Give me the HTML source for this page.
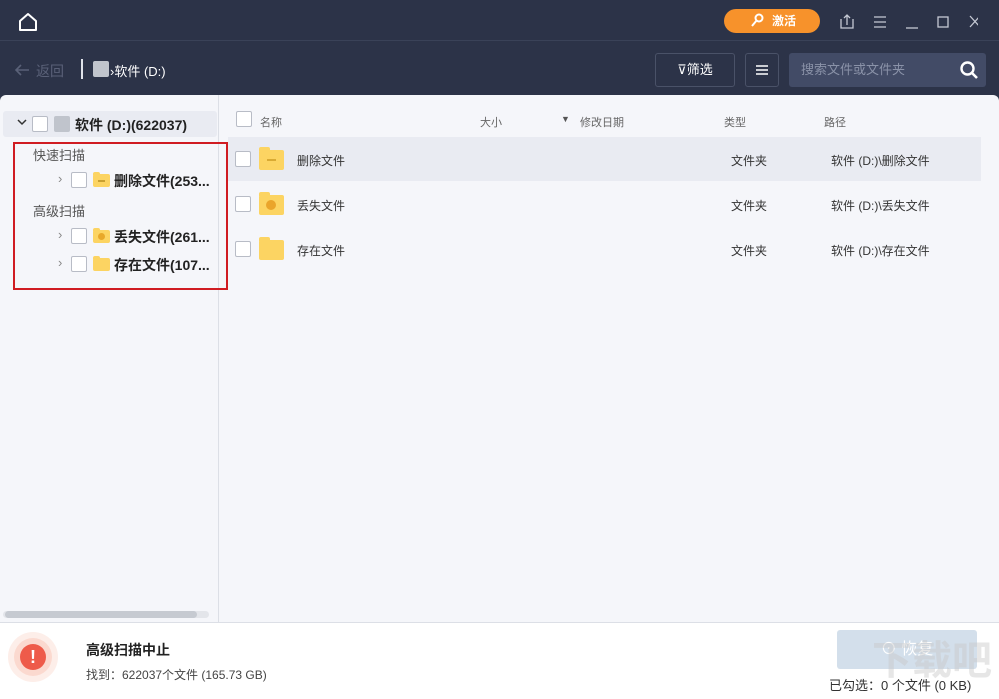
<!DOCTYPE html>
<html><head><meta charset="utf-8"><style>
*{margin:0;padding:0;box-sizing:border-box}
html,body{width:999px;height:699px;overflow:hidden}
body{background:#2c3348;font-family:"Liberation Sans","Noto Sans CJK SC",sans-serif;position:relative;font-size:12px;color:#333;white-space:nowrap}
.a{position:absolute}
.cb{position:absolute;width:16px;height:16px;border:1px solid #b8bcc6;background:#fff;border-radius:2px}
.fold{position:absolute;width:25px;height:20px;background:#fcd462;border-radius:2px}
.fold:before{content:"";position:absolute;left:0;top:-3px;width:11px;height:4px;background:#fcd462;border-radius:2px 2px 0 0}
.sf{width:17px;height:13px}
.sf:before{width:7px;height:3px;top:-2px}
</style></head><body>
<div class="a" style="left:0;top:40px;width:999px;height:1px;background:#3a4258"></div>
<svg class="a" style="left:17px;top:11px" width="22" height="22" viewBox="0 0 22 22"><path d="M3 10 L11 3 L19 10 V19 H3 Z" fill="none" stroke="#fff" stroke-width="2" stroke-linejoin="round"/></svg>
<div class="a" style="left:724px;top:9px;width:96px;height:24px;border-radius:12px;background:#f7922b;color:#fff;font-size:12px;font-weight:bold;line-height:24px;padding-left:48px">激活</div>
<svg class="a" style="left:750px;top:13px" width="14" height="16"><circle cx="9" cy="5" r="3.5" fill="none" stroke="#fff" stroke-width="2"/><path d="M7 7 L2 13" stroke="#fff" stroke-width="2"/></svg>
<svg class="a" style="left:838px;top:13px" width="140" height="18" fill="none" stroke="#c5c9d4" stroke-width="1.3"><path d="M3 6 V15 H15 V6 M9 12 V2 M6 5 L9 2 L12 5"/><path d="M36 4 H48 M36 9 H48 M36 14 H48"/><path d="M68 15 H80"/><rect x="100" y="4" width="10" height="10"/><path d="M132 3 L142 14 M142 3 L132 14"/></svg>
<svg class="a" style="left:14px;top:63px" width="16" height="14"><path d="M15 7 H2 M7 2 L2 7 L7 12" fill="none" stroke="#5a6178" stroke-width="1.6"/></svg>
<div class="a" style="left:36px;top:61px;color:#5a6178;font-size:14px">返回</div>
<div class="a" style="left:81px;top:59px;width:2px;height:20px;background:#dfe2ea"></div>
<div class="a" style="left:93px;top:61px;width:16px;height:16px;background:#c0c4cc;border-radius:2px"></div>
<div class="a" style="left:110px;top:61px;color:#fff;font-size:13px">›软件 (D:)</div>
<div class="a" style="left:655px;top:53px;width:80px;height:34px;border:1px solid #4a5268;border-radius:3px;color:#fff;font-size:13px;line-height:32px;text-align:center">⊽筛选</div>
<div class="a" style="left:745px;top:53px;width:34px;height:34px;border:1px solid #4a5268;border-radius:3px"></div>
<svg class="a" style="left:755px;top:63px" width="14" height="14"><path d="M1 3 H13 M1 7 H13 M1 11 H13" stroke="#fff" stroke-width="1.4"/></svg>
<div class="a" style="left:789px;top:53px;width:197px;height:34px;background:#424b66;border-radius:3px;color:#8a92a8;font-size:13px;line-height:34px;padding-left:12px">搜索文件或文件夹</div>
<svg class="a" style="left:959px;top:60px" width="20" height="20"><circle cx="8.5" cy="8.5" r="6" fill="none" stroke="#fff" stroke-width="2.4"/><path d="M13 13 L18 18" stroke="#fff" stroke-width="2.6"/></svg>

<div class="a" style="left:0;top:95px;width:999px;height:527px;background:#f5f6fa;border-radius:6px 6px 0 0"></div>
<div class="a" style="left:218px;top:95px;width:1px;height:527px;background:#dcdfe6"></div>
<div class="a" style="left:3px;top:111px;width:214px;height:26px;background:#e9ebf2;border-radius:3px"></div>
<svg class="a" style="left:17px;top:119px" width="10" height="8"><path d="M1 1 L5 5 L9 1" fill="none" stroke="#333" stroke-width="1.5"/></svg>
<div class="cb" style="left:32px;top:116px"></div>
<div class="a" style="left:54px;top:116px;width:16px;height:16px;background:#c0c4cc;border-radius:2px"></div>
<div class="a" style="left:75px;top:115px;font-size:14px;font-weight:bold;color:#222">软件 (D:)(622037)</div>
<div class="a" style="left:13px;top:142px;width:215px;height:148px;border:2px solid #d01c22"></div>
<div class="a" style="left:33px;top:145px;font-size:13px;color:#555">快速扫描</div>
<div class="a" style="left:33px;top:201px;font-size:13px;color:#555">高级扫描</div>
<div class="a" style="left:58px;top:171px;color:#888;font-size:13px">›</div>
<div class="a" style="left:58px;top:227px;color:#888;font-size:13px">›</div>
<div class="a" style="left:58px;top:255px;color:#888;font-size:13px">›</div>
<div class="cb" style="left:71px;top:172px"></div>
<div class="cb" style="left:71px;top:228px"></div>
<div class="cb" style="left:71px;top:256px"></div>
<div class="fold sf" style="left:93px;top:174px"><div class="a" style="left:5px;top:6px;width:7px;height:1.5px;background:#c9a030"></div></div>
<div class="fold sf" style="left:93px;top:230px"><div class="a" style="left:5px;top:3px;width:7px;height:7px;border-radius:50%;background:#e8a82a"></div></div>
<div class="fold sf" style="left:93px;top:258px"></div>
<div class="a" style="left:114px;top:171px;font-size:14px;font-weight:bold;color:#222">删除文件(253...</div>
<div class="a" style="left:114px;top:227px;font-size:14px;font-weight:bold;color:#222">丢失文件(261...</div>
<div class="a" style="left:114px;top:255px;font-size:14px;font-weight:bold;color:#222">存在文件(107...</div>
<div class="a" style="left:3px;top:611px;width:206px;height:7px;background:#e3e5ea;border-radius:4px"></div>
<div class="a" style="left:5px;top:611px;width:192px;height:7px;background:#c6cad1;border-radius:4px"></div>

<div class="cb" style="left:236px;top:111px"></div>
<div class="a" style="left:260px;top:114px;font-size:11px;color:#666">名称</div>
<div class="a" style="left:480px;top:114px;font-size:11px;color:#666">大小</div>
<div class="a" style="left:561px;top:114px;font-size:9px;color:#555">▼</div>
<div class="a" style="left:580px;top:114px;font-size:11px;color:#666">修改日期</div>
<div class="a" style="left:724px;top:114px;font-size:11px;color:#666">类型</div>
<div class="a" style="left:824px;top:114px;font-size:11px;color:#666">路径</div>
<div class="a" style="left:228px;top:137px;width:753px;height:44px;background:#e9ebf2"></div>
<div class="cb" style="left:235px;top:151px"></div>
<div class="cb" style="left:235px;top:196px"></div>
<div class="cb" style="left:235px;top:241px"></div>
<div class="fold" style="left:259px;top:150px"><div class="a" style="left:8px;top:9px;width:9px;height:2px;background:#d9aa33"></div></div>
<div class="fold" style="left:259px;top:195px"><div class="a" style="left:7px;top:5px;width:10px;height:10px;border-radius:50%;background:#eaa52b"></div></div>
<div class="fold" style="left:259px;top:240px"></div>
<div class="a" style="left:297px;top:152px;font-size:12px;color:#333">删除文件</div>
<div class="a" style="left:297px;top:197px;font-size:12px;color:#333">丢失文件</div>
<div class="a" style="left:297px;top:242px;font-size:12px;color:#333">存在文件</div>
<div class="a" style="left:731px;top:152px;color:#333">文件夹</div>
<div class="a" style="left:731px;top:197px;color:#333">文件夹</div>
<div class="a" style="left:731px;top:242px;color:#333">文件夹</div>
<div class="a" style="left:831px;top:152px;color:#333">软件 (D:)\删除文件</div>
<div class="a" style="left:831px;top:197px;color:#333">软件 (D:)\丢失文件</div>
<div class="a" style="left:831px;top:242px;color:#333">软件 (D:)\存在文件</div>

<div class="a" style="left:0;top:622px;width:999px;height:77px;background:#fff;border-top:1px solid #dcdfe6"></div>
<div class="a" style="left:8px;top:632px;width:50px;height:50px;border-radius:50%;background:#fdeee9"></div>
<div class="a" style="left:14px;top:638px;width:38px;height:38px;border-radius:50%;background:#fbd9cf"></div>
<div class="a" style="left:20px;top:644px;width:26px;height:26px;border-radius:50%;background:#ee5b4a;color:#fff;font-weight:bold;font-size:18px;text-align:center;line-height:26px">!</div>
<div class="a" style="left:86px;top:640px;font-size:14px;font-weight:bold;color:#222">高级扫描中止</div>
<div class="a" style="left:86px;top:666px;font-size:12px;color:#444">找到：622037个文件 (165.73 GB)</div>
<div class="a" style="left:837px;top:630px;width:140px;height:39px;background:#d3dfeb;border-radius:3px;color:#fff;font-size:16px;line-height:39px;text-align:center">⊙ 恢复</div>
<div class="a" style="left:829px;top:675px;font-size:13px;color:#333">已勾选：0 个文件 (0 KB)</div>
<div class="a" style="left:872px;top:636px;font-size:40px;line-height:50px;font-weight:bold;color:rgba(200,200,200,0.45);white-space:nowrap;width:127px;overflow:hidden">下载吧</div>
</body></html>
